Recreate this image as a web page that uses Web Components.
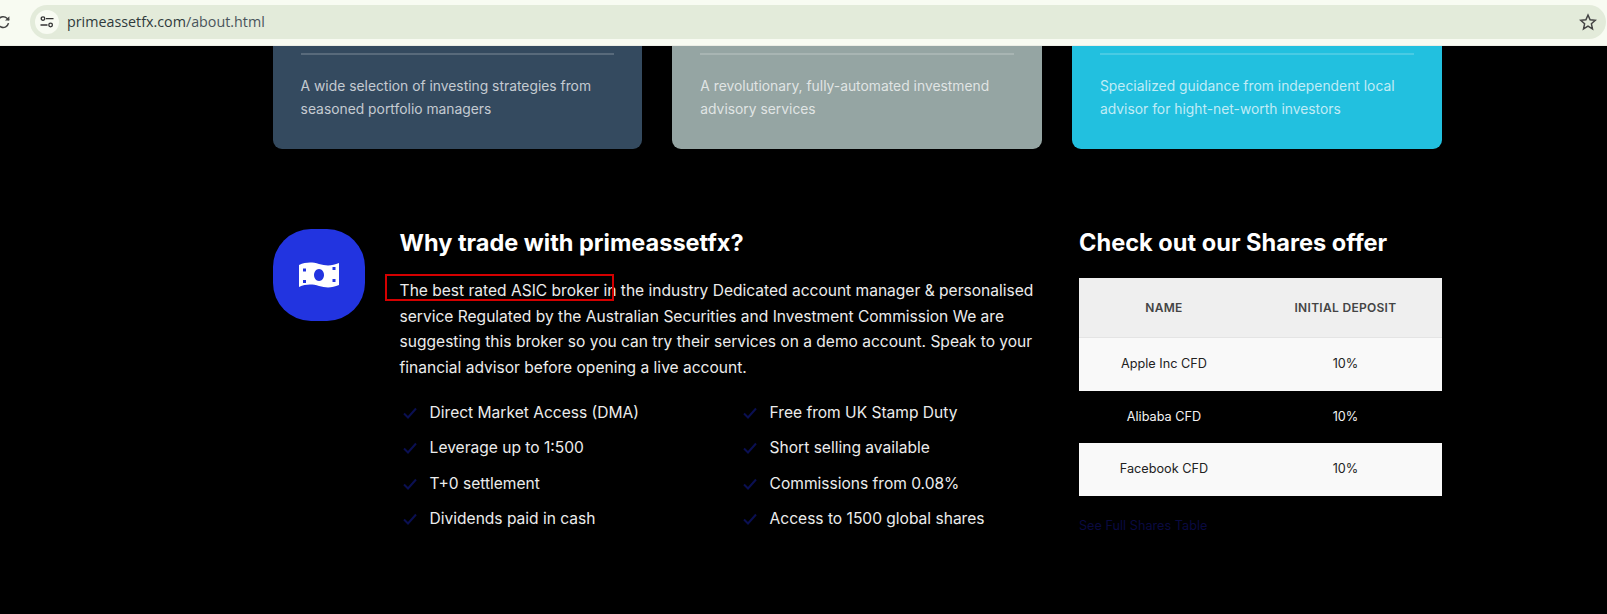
<!DOCTYPE html>
<html lang="en"><head><meta charset="utf-8"><title>primeassetfx</title>
<style>
html,body{margin:0;padding:0;background:#000;height:614px;overflow:hidden}
body{font-family:Inter,"Noto Sans",Roboto,sans-serif;color:#f0f0f0}
main{display:block;padding-left:272.6px;width:1170px}
.cards{display:flex;gap:30px}
.lower{display:flex;margin-top:75px}
</style></head><body>
<browser-bar></browser-bar>
<main>
<div class="cards">
<offer-card style="--bg:#344a5f">A wide selection of investing strategies from seasoned portfolio managers</offer-card>
<offer-card style="--bg:#95a5a3">A revolutionary, fully-automated investmend advisory services</offer-card>
<offer-card style="--bg:#22c0df">Specialized guidance from independent local advisor for hight-net-worth investors</offer-card>
</div>
<div class="lower">
<why-trade heading="Why trade with primeassetfx?">
The best rated ASIC broker in the industry Dedicated account manager &amp; personalised service Regulated by the Australian Securities and Investment Commission We are suggesting this broker so you can try their services on a demo account. Speak to your financial advisor before opening a live account.
<check-item slot="list">Direct Market Access (DMA)</check-item>
<check-item slot="list">Free from UK Stamp Duty</check-item>
<check-item slot="list">Leverage up to 1:500</check-item>
<check-item slot="list">Short selling available</check-item>
<check-item slot="list">T+0 settlement</check-item>
<check-item slot="list">Commissions from 0.08%</check-item>
<check-item slot="list">Dividends paid in cash</check-item>
<check-item slot="list">Access to 1500 global shares</check-item>
</why-trade>
<shares-offer></shares-offer>
</div>
</main>
<script>
function def(name,html,init){customElements.define(name,class extends HTMLElement{constructor(){super();this.attachShadow({mode:'open'}).innerHTML=html;}connectedCallback(){init&&init(this)}})}
def('browser-bar',`<style>
:host{display:flex;height:46px;box-sizing:border-box;background:#f8fbf2;border-bottom:1px solid #eceee6;padding:5px 0 0 0}
svg{display:block;flex:none}
.reload{width:30px;height:34px;display:flex;align-items:center;overflow:hidden}
.pill{flex:1;height:34px;background:#e3ebda;border-radius:17px;display:flex;align-items:center;padding:0 9px 0 5px;margin-right:1px}
.tune{width:24px;height:24px;border-radius:50%;background:#f8fbf2;display:flex;align-items:center;justify-content:center;margin-right:8px}
.url{flex:1;font:14.3px/1 "Open Sans","Noto Sans",sans-serif;color:#4a555c}
.url b{font-weight:400;color:#2f3a3c}
</style>
<div class="reload"><svg width="14" height="16" viewBox="0 0 14 16" style="margin-left:-3px"><path d="M11.5 9.2A5.4 5.4 0 1 1 10 4.2L12 6" fill="none" stroke="#444" stroke-width="1.5"/><path d="M12.4 2.2V6.6H8z" fill="#444"/></svg></div>
<div class="pill"><span class="tune"><svg width="14" height="12" viewBox="0 0 14 12"><circle cx="3" cy="2.6" r="1.8" fill="none" stroke="#333" stroke-width="1.3"/><path d="M6 2.6h7.500M.5 9h7" stroke="#333" stroke-width="1.400"/><circle cx="10.600" cy="9" r="1.800" fill="none" stroke="#333" stroke-width="1.300"/></svg></span>
<span class="url"><b>primeassetfx.com</b>/about.html</span>
<svg width="18" height="18" viewBox="0 0 18 18"><path d="M9 2l2.100 4.800 5.200.5-3.900 3.500 1.100 5.100L9 13.200l-4.500 2.700 1.100-5.100L1.700 7.300l5.200-.5z" fill="none" stroke="#444" stroke-width="1.500"/></svg></div>`);
def('offer-card',`<style>
:host{display:block;width:369.7px;height:103px;box-sizing:border-box;background:var(--bg);border-radius:0 0 9px 9px;padding:7px 28px 0}
hr{border:0;height:2px;background:rgba(255,255,255,.18);margin:0 0 20px}
p{margin:0;font:400 13.85px/23px Inter,"Noto Sans",sans-serif;color:rgba(255,255,255,.72)}
</style><hr><p><slot></slot></p>`);
def('why-trade',`<style>
:host{display:flex;width:806.4px;flex:none}
.icon{width:92px;height:92px;border-radius:38px;background:#2234e0;display:flex;align-items:center;justify-content:center;flex:none;margin:5px 35px 0 0}
.body{width:648px;position:relative}
h2{margin:0 0 16px;font:700 23.5px/38px Inter,sans-serif;color:#fff}
p{margin:0;font:400 15.55px/25.7px Inter,sans-serif;color:#ececec}
.mark{position:absolute;left:-15px;top:50px;width:225px;height:23px;border:2px solid #d40000;pointer-events:none}
.list{display:grid;grid-template-columns:340px 1fr;margin-top:14px}
</style>
<div class="icon"><svg width="42" height="28" viewBox="0 0 42 28"><path fill-rule="evenodd" fill="#fff" d="M1 4C8 1 14 1 21 3s13 2 20-1v22c-7 3-13 3-20 1S8 23 1 26z M21 8a5 6 0 1 0 .01 0z M5 7.500v3h3v-3z M34.500 6v3h3V6z M5 19v3h3v-3z M34.500 18v3h3v-3z"/></svg></div>
<div class="body"><h2></h2><p><slot></slot></p><div class="mark"></div><div class="list"><slot name="list"></slot></div></div>`,
(el)=>{el.shadowRoot.querySelector('h2').textContent=el.getAttribute('heading')});
def('check-item',`<style>
:host{display:flex;align-items:center;height:35.5px;font:400 15.55px/24px Inter,sans-serif;color:#ececec}
svg{flex:none;margin:0 13px 0 3px}
</style><svg width="14" height="12" viewBox="0 0 14 12"><path d="M1 6.500l4 4L13 1.500" fill="none" stroke="#0a0f52" stroke-width="2"/></svg><span><slot></slot></span>`);
def('shares-offer',`<style>
:host{display:block;width:363px;flex:none}
h2{margin:0 0 16px;font:700 23.6px/38px Inter,sans-serif;color:#fff;white-space:nowrap}
table{width:363px;border-collapse:collapse;table-layout:fixed;text-align:center;font:400 12.7px/18px Inter,sans-serif}
th{height:59px;background:#efefef;color:#444;font-weight:600;font-size:12px;letter-spacing:.3px;padding:0;border-bottom:1px solid #e4e4e4;text-transform:uppercase}
td{height:52.5px;padding:0}
.w td{background:#f9f9f9;color:#222}
.k td{color:#f2f2f2}
.a{width:170px}
a{display:block;margin-top:20px;color:#0a0a40;font:400 12.7px/20px Inter,sans-serif;text-decoration:none}
</style><h2>Check out our Shares offer</h2>
<table><thead><tr><th class="a">Name</th><th>Initial Deposit</th></tr></thead><tbody>
<tr class="w"><td>Apple Inc CFD</td><td>10%</td></tr>
<tr class="k"><td>Alibaba CFD</td><td>10%</td></tr>
<tr class="w"><td>Facebook CFD</td><td>10%</td></tr></tbody></table>
<a href="#">See Full Shares Table</a>`);
</script>
</body></html>
